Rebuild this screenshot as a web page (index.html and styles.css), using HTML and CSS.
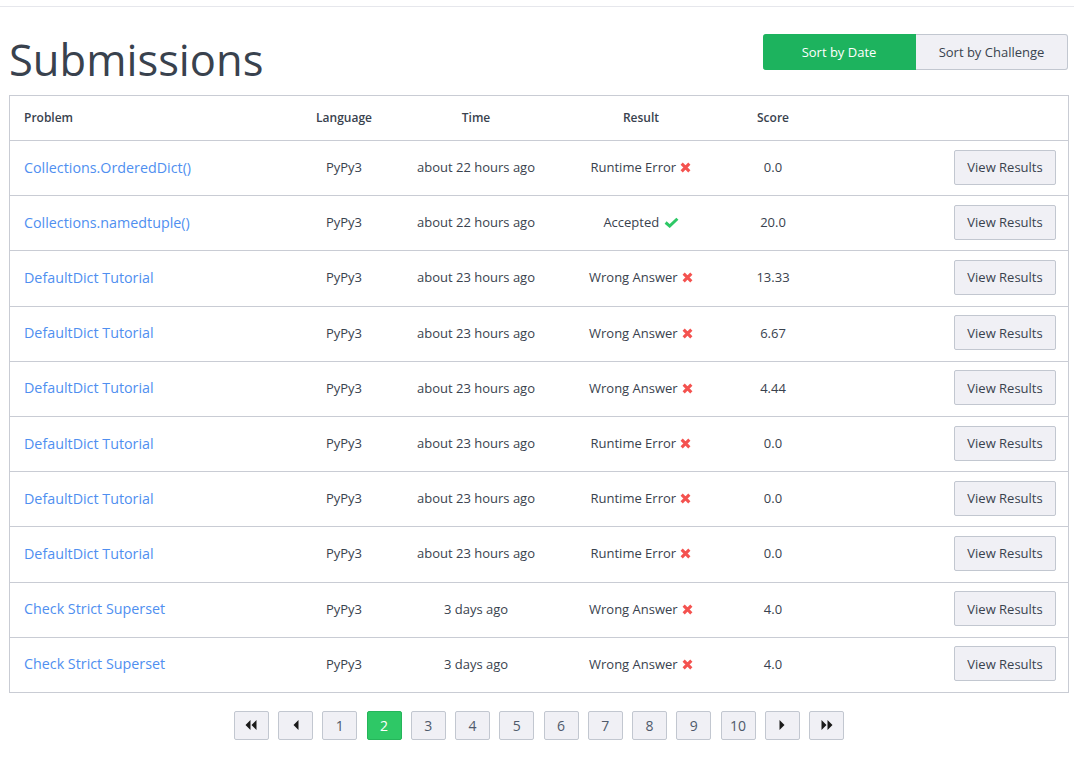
FILE: index.html
```html
<!DOCTYPE html>
<html lang="en">
<head>
<meta charset="utf-8">
<title>Submissions</title>
<link rel="stylesheet" href="styles.css">
</head>
<body>
<div class="topbar"></div>
<main class="page">
  <header class="head">
    <h1 class="title">Submissions</h1>
    <div class="sort">
      <button class="sort-btn sort-active">Sort by Date</button>
      <button class="sort-btn">Sort by Challenge</button>
    </div>
  </header>

  <div class="table">
    <div class="row row-head">
      <div class="c c-prob">Problem</div>
      <div class="c c-mid">Language</div>
      <div class="c c-mid">Time</div>
      <div class="c c-mid">Result</div>
      <div class="c c-mid">Score</div>
      <div class="c c-act"></div>
    </div>

    <div class="row">
      <div class="c c-prob"><a class="link" href="#">Collections.OrderedDict()</a></div>
      <div class="c c-mid">PyPy3</div>
      <div class="c c-mid">about 22 hours ago</div>
      <div class="c c-mid">Runtime Error <svg class="ico-x" viewBox="0 0 10 10"><path d="M1.5 1.5L8.5 8.5M8.5 1.5L1.5 8.5"/></svg></div>
      <div class="c c-mid">0.0</div>
      <div class="c c-act"><button class="view-btn">View Results</button></div>
    </div>
    <div class="row">
      <div class="c c-prob"><a class="link" href="#">Collections.namedtuple()</a></div>
      <div class="c c-mid">PyPy3</div>
      <div class="c c-mid">about 22 hours ago</div>
      <div class="c c-mid">Accepted <svg class="ico-ok" viewBox="0 0 14 10"><path d="M1.5 5L5.3 8.3L12.5 1.5"/></svg></div>
      <div class="c c-mid">20.0</div>
      <div class="c c-act"><button class="view-btn">View Results</button></div>
    </div>
    <div class="row">
      <div class="c c-prob"><a class="link" href="#">DefaultDict Tutorial</a></div>
      <div class="c c-mid">PyPy3</div>
      <div class="c c-mid">about 23 hours ago</div>
      <div class="c c-mid">Wrong Answer <svg class="ico-x" viewBox="0 0 10 10"><path d="M1.5 1.5L8.5 8.5M8.5 1.5L1.5 8.5"/></svg></div>
      <div class="c c-mid">13.33</div>
      <div class="c c-act"><button class="view-btn">View Results</button></div>
    </div>
    <div class="row">
      <div class="c c-prob"><a class="link" href="#">DefaultDict Tutorial</a></div>
      <div class="c c-mid">PyPy3</div>
      <div class="c c-mid">about 23 hours ago</div>
      <div class="c c-mid">Wrong Answer <svg class="ico-x" viewBox="0 0 10 10"><path d="M1.5 1.5L8.5 8.5M8.5 1.5L1.5 8.5"/></svg></div>
      <div class="c c-mid">6.67</div>
      <div class="c c-act"><button class="view-btn">View Results</button></div>
    </div>
    <div class="row">
      <div class="c c-prob"><a class="link" href="#">DefaultDict Tutorial</a></div>
      <div class="c c-mid">PyPy3</div>
      <div class="c c-mid">about 23 hours ago</div>
      <div class="c c-mid">Wrong Answer <svg class="ico-x" viewBox="0 0 10 10"><path d="M1.5 1.5L8.5 8.5M8.5 1.5L1.5 8.5"/></svg></div>
      <div class="c c-mid">4.44</div>
      <div class="c c-act"><button class="view-btn">View Results</button></div>
    </div>
    <div class="row">
      <div class="c c-prob"><a class="link" href="#">DefaultDict Tutorial</a></div>
      <div class="c c-mid">PyPy3</div>
      <div class="c c-mid">about 23 hours ago</div>
      <div class="c c-mid">Runtime Error <svg class="ico-x" viewBox="0 0 10 10"><path d="M1.5 1.5L8.5 8.5M8.5 1.5L1.5 8.5"/></svg></div>
      <div class="c c-mid">0.0</div>
      <div class="c c-act"><button class="view-btn">View Results</button></div>
    </div>
    <div class="row">
      <div class="c c-prob"><a class="link" href="#">DefaultDict Tutorial</a></div>
      <div class="c c-mid">PyPy3</div>
      <div class="c c-mid">about 23 hours ago</div>
      <div class="c c-mid">Runtime Error <svg class="ico-x" viewBox="0 0 10 10"><path d="M1.5 1.5L8.5 8.5M8.5 1.5L1.5 8.5"/></svg></div>
      <div class="c c-mid">0.0</div>
      <div class="c c-act"><button class="view-btn">View Results</button></div>
    </div>
    <div class="row">
      <div class="c c-prob"><a class="link" href="#">DefaultDict Tutorial</a></div>
      <div class="c c-mid">PyPy3</div>
      <div class="c c-mid">about 23 hours ago</div>
      <div class="c c-mid">Runtime Error <svg class="ico-x" viewBox="0 0 10 10"><path d="M1.5 1.5L8.5 8.5M8.5 1.5L1.5 8.5"/></svg></div>
      <div class="c c-mid">0.0</div>
      <div class="c c-act"><button class="view-btn">View Results</button></div>
    </div>
    <div class="row">
      <div class="c c-prob"><a class="link" href="#">Check Strict Superset</a></div>
      <div class="c c-mid">PyPy3</div>
      <div class="c c-mid">3 days ago</div>
      <div class="c c-mid">Wrong Answer <svg class="ico-x" viewBox="0 0 10 10"><path d="M1.5 1.5L8.5 8.5M8.5 1.5L1.5 8.5"/></svg></div>
      <div class="c c-mid">4.0</div>
      <div class="c c-act"><button class="view-btn">View Results</button></div>
    </div>
    <div class="row">
      <div class="c c-prob"><a class="link" href="#">Check Strict Superset</a></div>
      <div class="c c-mid">PyPy3</div>
      <div class="c c-mid">3 days ago</div>
      <div class="c c-mid">Wrong Answer <svg class="ico-x" viewBox="0 0 10 10"><path d="M1.5 1.5L8.5 8.5M8.5 1.5L1.5 8.5"/></svg></div>
      <div class="c c-mid">4.0</div>
      <div class="c c-act"><button class="view-btn">View Results</button></div>
    </div>
  </div>

  <nav class="pager">
    <a class="pg" href="#"><svg class="pg-ico2" viewBox="0 0 12 10"><path d="M5.5 0V10L0.5 5Z M11.5 0V10L6.5 5Z"/></svg></a>
    <a class="pg" href="#"><svg class="pg-ico" viewBox="0 0 6 10"><path d="M5.5 0V10L0.5 5Z"/></svg></a>
    <a class="pg" href="#">1</a>
    <a class="pg pg-active" href="#">2</a>
    <a class="pg" href="#">3</a>
    <a class="pg" href="#">4</a>
    <a class="pg" href="#">5</a>
    <a class="pg" href="#">6</a>
    <a class="pg" href="#">7</a>
    <a class="pg" href="#">8</a>
    <a class="pg" href="#">9</a>
    <a class="pg" href="#">10</a>
    <a class="pg" href="#"><svg class="pg-ico" viewBox="0 0 6 10"><path d="M0.5 0V10L5.5 5Z"/></svg></a>
    <a class="pg" href="#"><svg class="pg-ico2" viewBox="0 0 12 10"><path d="M0.5 0V10L5.5 5Z M6.5 0V10L11.5 5Z"/></svg></a>
  </nav>
</main>
</body>
</html>
```

FILE: styles.css
```css
* { box-sizing: border-box; }

body {
  margin: 0;
  background: #ffffff;
  font-family: "Open Sans", "Liberation Sans", sans-serif;
  color: #39424e;
}

.topbar {
  height: 7px;
  border-bottom: 1px solid #e6e7ec;
}

.page {
  width: 1060px;
  margin-left: 9px;
}

.head {
  display: flex;
  justify-content: space-between;
  align-items: flex-start;
  padding-top: 26px;
  margin-bottom: 9px;
}

.title {
  margin: 0;
  font-size: 43.5px;
  line-height: 53px;
  font-weight: 500;
  color: #39424e;
}

.sort {
  display: flex;
  margin-top: 1px;
  margin-right: 1px;
}

.sort-btn {
  height: 36px;
  font-family: inherit;
  font-size: 13px;
  border: 1px solid #c2c7d0;
  background: #f0f0f5;
  color: #39424e;
  padding: 0;
  width: 152px;
  border-radius: 0 3px 3px 0;
  border-left: none;
}

.sort-btn.sort-active {
  width: 153px;
  background: #1db35e;
  border-color: #1db35e;
  color: #ffffff;
  border-radius: 3px 0 0 3px;
}

.table {
  border: 1px solid #c9ccd4;
}

.row {
  display: grid;
  grid-template-columns: 274px 120px 144px 186px 78px 1fr;
  align-items: center;
  height: 55.2px;
  padding-bottom: 2px;
  border-top: 1px solid #c9ccd4;
  font-size: 13px;
  color: #39424e;
}

.row.row-head {
  height: 44px;
  border-top: none;
  font-size: 12px;
  font-weight: 600;
  color: #39424e;
}

.c-prob {
  padding-left: 14px;
}

.c-mid {
  text-align: center;
  white-space: nowrap;
}

.c-act {
  display: flex;
  justify-content: flex-end;
  padding-right: 12px;
}

.link {
  font-size: 14.3px;
  color: #4f8ff0;
  text-decoration: none;
}

.ico-x {
  width: 11px;
  height: 11px;
  vertical-align: -1px;
  margin-left: 1px;
}

.ico-x path {
  stroke: #f4524f;
  stroke-width: 2.8;
  fill: none;
}

.ico-ok {
  width: 15px;
  height: 11px;
  vertical-align: -1px;
  margin-left: 1px;
}

.ico-ok path {
  stroke: #2ec866;
  stroke-width: 2.8;
  fill: none;
}

.view-btn {
  width: 102px;
  height: 35px;
  font-family: inherit;
  font-size: 13px;
  color: #39424e;
  background: #f0f0f5;
  border: 1px solid #c2c7d0;
  border-radius: 2px;
  padding: 0;
}

.pager {
  display: flex;
  justify-content: center;
  gap: 9.25px;
  margin-top: 18px;
}

.pg {
  width: 35px;
  height: 29px;
  display: flex;
  align-items: center;
  justify-content: center;
  font-size: 14px;
  color: #4f5a6b;
  text-decoration: none;
  background: #f0f0f5;
  border: 1px solid #c2c7d0;
  border-radius: 2px;
}

.pg.pg-active {
  background: #2ec866;
  border-color: #25b55a;
  color: #ffffff;
}

.pg-ico {
  width: 6px;
  height: 10px;
}

.pg-ico2 {
  width: 12px;
  height: 10px;
}

.pg-ico path,
.pg-ico2 path {
  fill: #1a1a1a;
}
```
